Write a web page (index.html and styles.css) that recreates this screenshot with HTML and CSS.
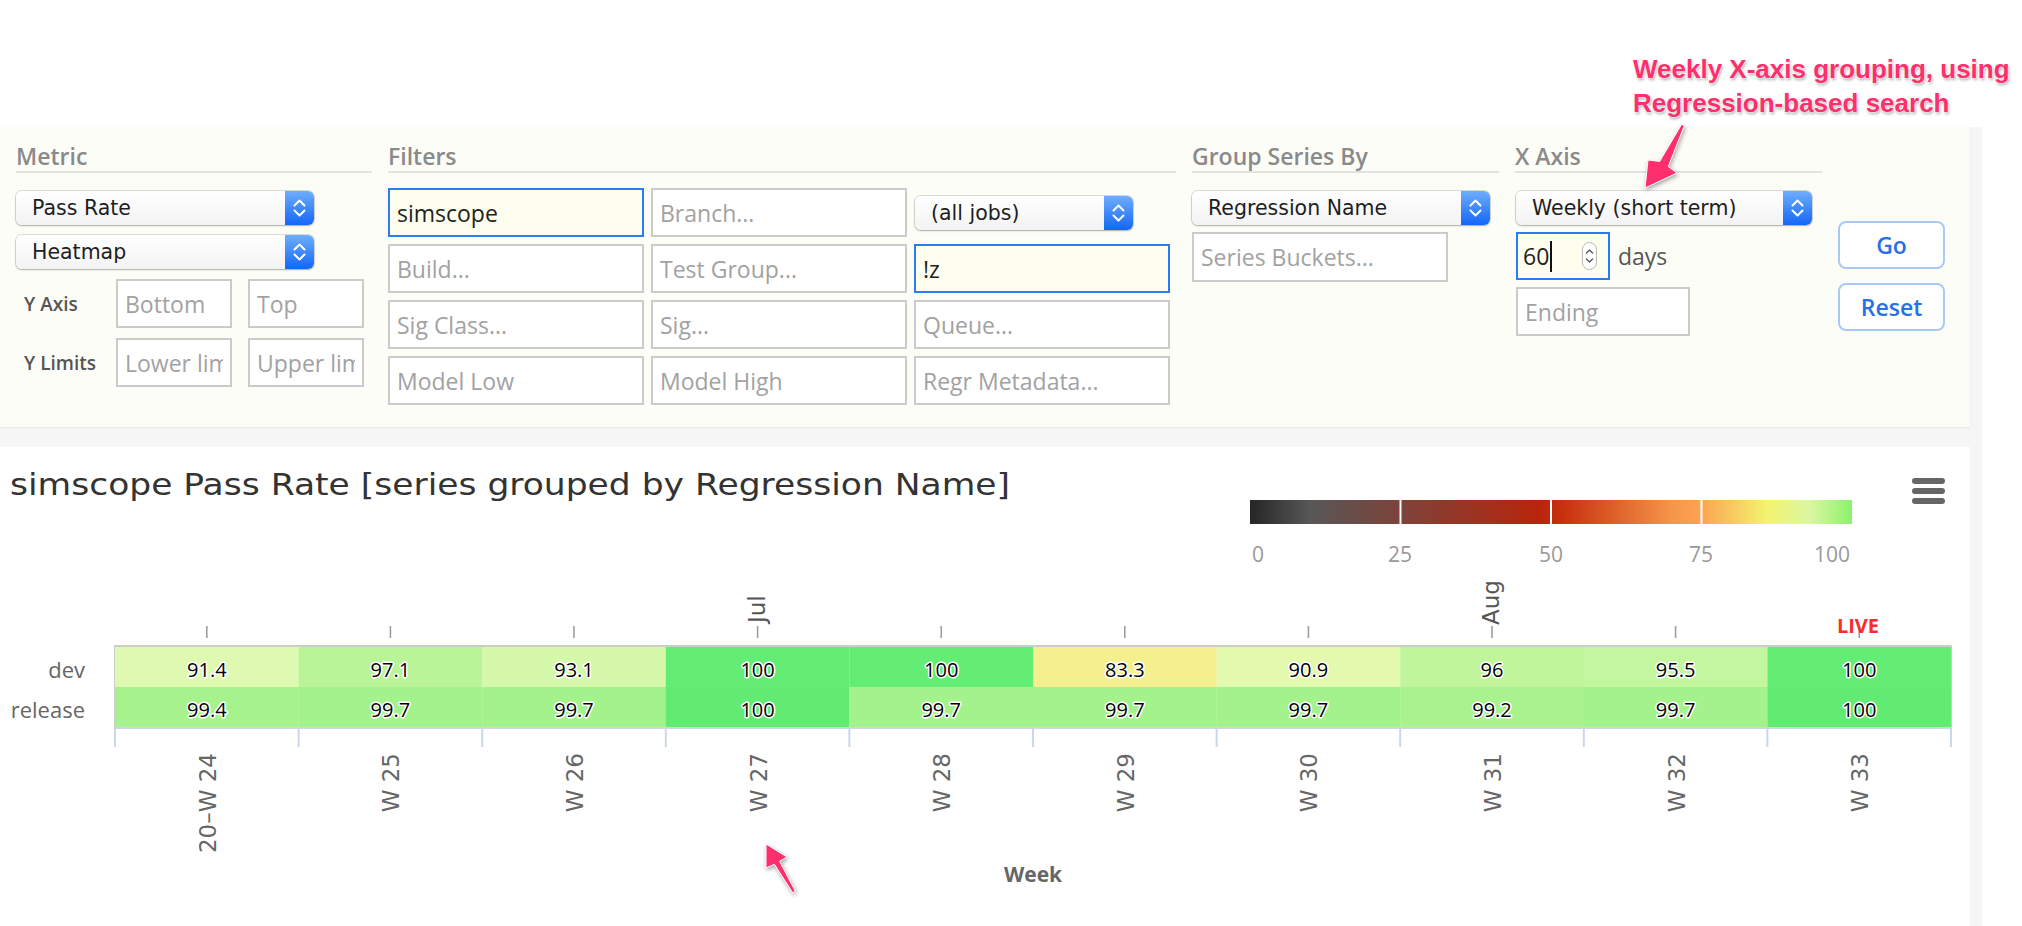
FILE: index.html
```html
<!DOCTYPE html>
<html lang="en">
<head>
<meta charset="utf-8">
<title>simscope Pass Rate</title>
<link rel="stylesheet" href="styles.css">
</head>
<body>
<div class="page">
  <div class="top-space"></div>
  <main class="workspace">
    <section class="panel">
      <div class="col col-metric">
        <h3 class="col-head">Metric</h3>
        <div class="stack">
          <div class="select sel-wide"><span class="select-text">Pass Rate</span><span class="stepper"><svg width="29" height="34" viewBox="0 0 29 34"><path class="chev" d="M9.5 14.5 L14.5 9.5 L19.5 14.5 M9.5 19.5 L14.5 24.5 L19.5 19.5"/></svg></span></div>
          <div class="select sel-wide"><span class="select-text">Heatmap</span><span class="stepper"><svg width="29" height="34" viewBox="0 0 29 34"><path class="chev" d="M9.5 14.5 L14.5 9.5 L19.5 14.5 M9.5 19.5 L14.5 24.5 L19.5 19.5"/></svg></span></div>
          <div class="limit-row"><span class="row-label">Y Axis</span><input class="field field-sm" placeholder="Bottom"><input class="field field-sm" placeholder="Top"></div>
          <div class="limit-row"><span class="row-label">Y Limits</span><input class="field field-sm" placeholder="Lower limit"><input class="field field-sm" placeholder="Upper limit"></div>
        </div>
      </div>
      <div class="col col-filters">
        <h3 class="col-head">Filters</h3>
        <div class="filter-grid">
          <input class="field focus" value="simscope">
          <input class="field" placeholder="Branch...">
          <div class="cell-center"><div class="select sel-jobs"><span class="select-text">(all jobs)</span><span class="stepper"><svg width="29" height="34" viewBox="0 0 29 34"><path class="chev" d="M9.5 14.5 L14.5 9.5 L19.5 14.5 M9.5 19.5 L14.5 24.5 L19.5 19.5"/></svg></span></div></div>
          <input class="field" placeholder="Build...">
          <input class="field" placeholder="Test Group...">
          <input class="field focus" value="!z">
          <input class="field" placeholder="Sig Class...">
          <input class="field" placeholder="Sig...">
          <input class="field" placeholder="Queue...">
          <input class="field" placeholder="Model Low">
          <input class="field" placeholder="Model High">
          <input class="field" placeholder="Regr Metadata...">
        </div>
      </div>
      <div class="col col-group">
        <h3 class="col-head">Group Series By</h3>
        <div class="group-stack">
          <div class="select sel-wide"><span class="select-text">Regression Name</span><span class="stepper"><svg width="29" height="34" viewBox="0 0 29 34"><path class="chev" d="M9.5 14.5 L14.5 9.5 L19.5 14.5 M9.5 19.5 L14.5 24.5 L19.5 19.5"/></svg></span></div>
          <input class="field field-buckets" placeholder="Series Buckets...">
        </div>
      </div>
      <div class="col col-xaxis">
        <h3 class="col-head">X Axis</h3>
        <div class="xaxis-stack">
          <div class="select sel-x"><span class="select-text">Weekly (short term)</span><span class="stepper"><svg width="29" height="34" viewBox="0 0 29 34"><path class="chev" d="M9.5 14.5 L14.5 9.5 L19.5 14.5 M9.5 19.5 L14.5 24.5 L19.5 19.5"/></svg></span></div>
          <div class="days-row">
            <div class="num"><span class="num-value">60</span><span class="caret"></span><svg class="spin" width="15" height="28" viewBox="0 0 15 28"><rect x="0.5" y="0.5" width="14" height="27" rx="7" class="spin-body"/><path class="spin-chev" d="M4.5 11 L7.5 8 L10.5 11 M4.5 17 L7.5 20 L10.5 17"/></svg></div>
            <span class="days">days</span>
          </div>
          <input class="field field-ending" placeholder="Ending">
        </div>
      </div>
      <div class="col col-buttons">
        <button class="btn">Go</button>
        <button class="btn">Reset</button>
      </div>
    </section>

    <section class="chart-card">
      <svg class="chart-svg" width="1970" height="479" viewBox="0 0 1970 479">
        <defs>
          <linearGradient id="legendGrad" x1="0" x2="1" y1="0" y2="0">
            <stop offset="0" stop-color="#262626"/>
            <stop offset="0.1" stop-color="#575757"/>
            <stop offset="0.25" stop-color="#7d4339"/>
            <stop offset="0.48" stop-color="#b8250b"/>
            <stop offset="0.52" stop-color="#c9300f"/>
            <stop offset="0.7" stop-color="#f59548"/>
            <stop offset="0.75" stop-color="#fba552"/>
            <stop offset="0.86" stop-color="#f3f46e"/>
            <stop offset="0.93" stop-color="#dbf6a2"/>
            <stop offset="1" stop-color="#8af36c"/>
          </linearGradient>
        </defs>

        <text class="c-title" x="10" y="48" textLength="1000" lengthAdjust="spacingAndGlyphs">simscope Pass Rate [series grouped by Regression Name]</text>

        <g class="c-menu">
          <rect x="1912" y="31" width="33" height="6" rx="3"/>
          <rect x="1912" y="41" width="33" height="6" rx="3"/>
          <rect x="1912" y="51" width="33" height="6" rx="3"/>
        </g>

        <rect x="1250" y="53" width="602" height="24" fill="url(#legendGrad)"/>
        <g class="c-legend-sep">
          <line x1="1400.5" y1="53" x2="1400.5" y2="77"/>
          <line x1="1551" y1="53" x2="1551" y2="77"/>
          <line x1="1701.5" y1="53" x2="1701.5" y2="77"/>
        </g>
        <g class="c-legend-lbl">
          <text x="1252" y="115">0</text>
          <text x="1400" y="115" text-anchor="middle">25</text>
          <text x="1551" y="115" text-anchor="middle">50</text>
          <text x="1701" y="115" text-anchor="middle">75</text>
          <text x="1850" y="115" text-anchor="end">100</text>
        </g>

        <g class="c-month">
          <text transform="translate(765,176) rotate(-90)">Jul</text>
          <text transform="translate(1499,178) rotate(-90)">Aug</text>
        </g>

        <g class="c-top-tick">
          <line x1="206.8" y1="179" x2="206.8" y2="191"/>
          <line x1="390.4" y1="179" x2="390.4" y2="191"/>
          <line x1="574" y1="179" x2="574" y2="191"/>
          <line x1="757.6" y1="179" x2="757.6" y2="191"/>
          <line x1="941.2" y1="179" x2="941.2" y2="191"/>
          <line x1="1124.8" y1="179" x2="1124.8" y2="191"/>
          <line x1="1308.4" y1="179" x2="1308.4" y2="191"/>
          <line x1="1492" y1="179" x2="1492" y2="191"/>
          <line x1="1675.6" y1="179" x2="1675.6" y2="191"/>
          <line x1="1859.2" y1="179" x2="1859.2" y2="191"/>
        </g>
        <text class="c-live" x="1858" y="186" text-anchor="middle">LIVE</text>

        <rect class="c-plot-border" x="115" y="199" width="1836" height="82"/>

        <g class="c-cells">
          <rect x="115" y="200" width="183.8" height="40" fill="#e0f9b0"/>
          <rect x="298.6" y="200" width="183.8" height="40" fill="#b9f598"/>
          <rect x="482.2" y="200" width="183.8" height="40" fill="#d5f8ab"/>
          <rect x="665.8" y="200" width="183.8" height="40" fill="#63ed74"/>
          <rect x="849.4" y="200" width="183.8" height="40" fill="#63ed74"/>
          <rect x="1033" y="200" width="183.8" height="40" fill="#f6ef8e"/>
          <rect x="1216.6" y="200" width="183.8" height="40" fill="#e2f9ae"/>
          <rect x="1400.2" y="200" width="183.8" height="40" fill="#c0f59c"/>
          <rect x="1583.8" y="200" width="183.8" height="40" fill="#c4f6a0"/>
          <rect x="1767.4" y="200" width="183.6" height="40" fill="#63ed74"/>

          <rect x="115" y="240" width="183.8" height="40" fill="#a6f38d"/>
          <rect x="298.6" y="240" width="183.8" height="40" fill="#a3f28b"/>
          <rect x="482.2" y="240" width="183.8" height="40" fill="#a3f28b"/>
          <rect x="665.8" y="240" width="183.8" height="40" fill="#62eb73"/>
          <rect x="849.4" y="240" width="183.8" height="40" fill="#a3f28b"/>
          <rect x="1033" y="240" width="183.8" height="40" fill="#a3f28b"/>
          <rect x="1216.6" y="240" width="183.8" height="40" fill="#a3f28b"/>
          <rect x="1400.2" y="240" width="183.8" height="40" fill="#a8f38e"/>
          <rect x="1583.8" y="240" width="183.8" height="40" fill="#a3f28b"/>
          <rect x="1767.4" y="240" width="183.6" height="40" fill="#62eb73"/>
        </g>

        <g class="c-val">
          <text x="206.8" y="230">91.4</text>
          <text x="390.4" y="230">97.1</text>
          <text x="574" y="230">93.1</text>
          <text x="757.6" y="230">100</text>
          <text x="941.2" y="230">100</text>
          <text x="1124.8" y="230">83.3</text>
          <text x="1308.4" y="230">90.9</text>
          <text x="1492" y="230">96</text>
          <text x="1675.6" y="230">95.5</text>
          <text x="1859.2" y="230">100</text>

          <text x="206.8" y="270">99.4</text>
          <text x="390.4" y="270">99.7</text>
          <text x="574" y="270">99.7</text>
          <text x="757.6" y="270">100</text>
          <text x="941.2" y="270">99.7</text>
          <text x="1124.8" y="270">99.7</text>
          <text x="1308.4" y="270">99.7</text>
          <text x="1492" y="270">99.2</text>
          <text x="1675.6" y="270">99.7</text>
          <text x="1859.2" y="270">100</text>
        </g>

        <g class="c-ylbl">
          <text x="85" y="231">dev</text>
          <text x="85" y="271">release</text>
        </g>

        <line class="c-axis" x1="115" y1="281" x2="1952" y2="281"/>
        <g class="c-bot-tick">
          <line x1="115" y1="282" x2="115" y2="300"/>
          <line x1="298.6" y1="282" x2="298.6" y2="300"/>
          <line x1="482.2" y1="282" x2="482.2" y2="300"/>
          <line x1="665.8" y1="282" x2="665.8" y2="300"/>
          <line x1="849.4" y1="282" x2="849.4" y2="300"/>
          <line x1="1033" y1="282" x2="1033" y2="300"/>
          <line x1="1216.6" y1="282" x2="1216.6" y2="300"/>
          <line x1="1400.2" y1="282" x2="1400.2" y2="300"/>
          <line x1="1583.8" y1="282" x2="1583.8" y2="300"/>
          <line x1="1767.4" y1="282" x2="1767.4" y2="300"/>
          <line x1="1951" y1="282" x2="1951" y2="300"/>
        </g>

        <g class="c-xlbl">
          <text transform="translate(216,306) rotate(-90)">20–W 24</text>
          <text transform="translate(399.4,306) rotate(-90)">W 25</text>
          <text transform="translate(583,306) rotate(-90)">W 26</text>
          <text transform="translate(766.6,306) rotate(-90)">W 27</text>
          <text transform="translate(950.2,306) rotate(-90)">W 28</text>
          <text transform="translate(1133.8,306) rotate(-90)">W 29</text>
          <text transform="translate(1317.4,306) rotate(-90)">W 30</text>
          <text transform="translate(1501,306) rotate(-90)">W 31</text>
          <text transform="translate(1684.6,306) rotate(-90)">W 32</text>
          <text transform="translate(1868.2,306) rotate(-90)">W 33</text>
        </g>

        <text class="c-xtitle" x="1033" y="435" text-anchor="middle">Week</text>
      </svg>
    </section>
  </main>

  <div class="annotation">Weekly X-axis grouping, using<br>Regression-based search</div>
  <svg class="overlay" width="2022" height="926" viewBox="0 0 2022 926">
    <polygon class="arrow-shape" points="1681.7,124.2 1659.7,161.4 1648,160 1645,188 1677,173 1668.3,166.6 1684.3,125.8"/>
    <polygon class="arrow-shape" points="795.3,891.2 779.6,861.3 787,857 766,844 766,868 774.4,864.3 792.7,892.8"/>
  </svg>
</div>
</body>
</html>
```

FILE: styles.css
```css
* {
  box-sizing: border-box;
}

html,
body {
  margin: 0;
  padding: 0;
  background: #ffffff;
}

body {
  font-family: "Open Sans", "DejaVu Sans", sans-serif;
  color: #222222;
  overflow: hidden;
}

.page {
  position: relative;
  width: 2022px;
}

.top-space {
  height: 127px;
}

.workspace {
  width: 1982px;
  padding-right: 12px;
  background: #f6f6f6;
  display: flex;
  flex-direction: column;
  gap: 20px;
}

/* ---------- control panel ---------- */
.panel {
  height: 300px;
  background: #fdfdf8;
  display: flex;
  align-items: flex-start;
  gap: 16px;
  padding: 14px 0 0 16px;
  box-shadow: 0 1px 2px rgba(0, 0, 0, 0.08);
}

.col-metric { width: 356px; }
.col-filters { width: 788px; }
.col-group { width: 307px; }
.col-xaxis { width: 307px; }

.col-buttons {
  width: 107px;
  padding-top: 80px;
  display: flex;
  flex-direction: column;
  gap: 14px;
}

.col-head {
  margin: 0;
  font-size: 23px;
  font-weight: 600;
  line-height: 30px;
  color: #8a8a8a;
  border-bottom: 2px solid #e2e2e2;
  white-space: nowrap;
}

.stack {
  margin-top: 18px;
  display: flex;
  flex-direction: column;
  gap: 10px;
}

.select {
  display: flex;
  height: 34px;
  border-radius: 6px;
  background: linear-gradient(#ffffff, #f3f3f3);
  box-shadow: 0 0 0 1px rgba(0, 0, 0, 0.13), 0 1px 2px rgba(0, 0, 0, 0.22);
  overflow: hidden;
}

.select-text {
  flex: 1;
  padding-left: 16px;
  font-family: "DejaVu Sans", sans-serif;
  font-size: 20.5px;
  line-height: 34px;
  color: #1e1e1e;
  white-space: nowrap;
  overflow: hidden;
}

.stepper {
  width: 29px;
  flex: none;
  display: flex;
  background: linear-gradient(#6eaefe, #1466f6);
}

.chev {
  fill: none;
  stroke: #ffffff;
  stroke-width: 2;
  stroke-linecap: round;
  stroke-linejoin: round;
}

.sel-wide { width: 298px; }
.sel-jobs { width: 218px; }
.sel-x { width: 296px; }

.limit-row {
  display: flex;
  align-items: center;
  gap: 16px;
  height: 49px;
}

.row-label {
  width: 84px;
  padding-left: 8px;
  font-size: 19px;
  font-weight: 600;
  color: #555555;
  white-space: nowrap;
}

.field {
  width: 256px;
  height: 49px;
  margin: 0;
  border: 2px solid #cbcbcb;
  border-radius: 0;
  background: #ffffff;
  font-family: "Open Sans", sans-serif;
  font-size: 23px;
  color: #222222;
  padding: 0 7px;
  outline: none;
}

.field::placeholder {
  color: #a2a2a2;
  opacity: 1;
}

.field.focus {
  border-color: #2a7cf3;
  background: #fefeee;
}

.field-sm { width: 116px; }

.filter-grid {
  margin-top: 15px;
  display: grid;
  grid-template-columns: repeat(3, 256px);
  grid-auto-rows: 49px;
  column-gap: 7px;
  row-gap: 7px;
}

.cell-center {
  display: flex;
  align-items: center;
  padding-left: 1px;
}

.group-stack {
  margin-top: 18px;
  display: flex;
  flex-direction: column;
  gap: 7px;
}

.field-buckets { height: 50px; }

.xaxis-stack {
  margin-top: 18px;
  display: flex;
  flex-direction: column;
  gap: 7px;
  padding-left: 1px;
}

.days-row {
  display: flex;
  align-items: center;
  gap: 8px;
}

.num {
  width: 94px;
  height: 48px;
  border: 2px solid #2a7cf3;
  background: #fefeee;
  display: flex;
  align-items: center;
  padding-left: 5px;
}

.num-value {
  font-size: 23px;
  color: #222222;
}

.caret {
  width: 2px;
  height: 31px;
  background: #111111;
  margin-left: 1px;
}

.spin {
  margin-left: auto;
  margin-right: 11px;
}

.spin-body {
  fill: #ffffff;
  stroke: #b8b8b8;
}

.spin-chev {
  fill: none;
  stroke: #555555;
  stroke-width: 1.3;
  stroke-linecap: round;
  stroke-linejoin: round;
}

.days {
  font-size: 23px;
  color: #555555;
}

.field-ending { width: 174px; }

.btn {
  width: 107px;
  height: 48px;
  border: 2px solid #a9c9f7;
  border-radius: 8px;
  background: #ffffff;
  color: #2670e8;
  font-family: "Open Sans", sans-serif;
  font-size: 23px;
  font-weight: 600;
  padding: 0;
}

/* ---------- chart ---------- */
.chart-card {
  background: #ffffff;
  height: 479px;
}

.chart-svg {
  display: block;
}

.c-title {
  font-family: "DejaVu Sans", sans-serif;
  font-size: 31px;
  fill: #333333;
}

.c-menu rect { fill: #666666; }

.c-legend-sep line {
  stroke: #ffffff;
  stroke-width: 2;
}

.c-legend-lbl text {
  font-family: "Open Sans", sans-serif;
  font-size: 21px;
  fill: #999999;
}

.c-month text {
  font-family: "DejaVu Sans", sans-serif;
  font-size: 23px;
  fill: #555555;
}

.c-top-tick line {
  stroke: #999999;
  stroke-width: 1.5;
}

.c-live {
  font-family: "Open Sans", sans-serif;
  font-size: 20px;
  font-weight: 700;
  fill: #ff2b2b;
}

.c-plot-border {
  fill: none;
  stroke: #cccccc;
  stroke-width: 2;
}

.c-val text {
  font-family: "Open Sans", sans-serif;
  font-size: 20px;
  font-weight: 500;
  text-anchor: middle;
  fill: #000000;
  stroke: #ffffff;
  stroke-width: 3px;
  stroke-linejoin: round;
  paint-order: stroke;
}

.c-ylbl text {
  font-family: "Open Sans", sans-serif;
  font-size: 22px;
  fill: #666666;
  text-anchor: end;
}

.c-axis {
  stroke: #ccd6eb;
  stroke-width: 2;
}

.c-bot-tick line {
  stroke: #ccd6eb;
  stroke-width: 2;
}

.c-xlbl text {
  font-family: "DejaVu Sans", sans-serif;
  font-size: 23px;
  fill: #666666;
  text-anchor: end;
}

.c-xtitle {
  font-family: "Open Sans", sans-serif;
  font-size: 21px;
  font-weight: 700;
  fill: #666666;
}

/* ---------- annotations ---------- */
.annotation {
  position: absolute;
  left: 1633px;
  top: 52px;
  font-family: "Liberation Sans", Arial, sans-serif;
  font-weight: 700;
  font-size: 26px;
  line-height: 34px;
  color: #ff2e6c;
  white-space: nowrap;
  text-shadow: 0 0 2px #ffffff, 0 0 2px #ffffff, 1px 2px 3px rgba(0, 0, 0, 0.35);
  z-index: 2;
}

.overlay {
  position: absolute;
  left: 0;
  top: 0;
  pointer-events: none;
  z-index: 2;
}

.arrow-shape {
  fill: #ff2e6c;
  stroke: #ffffff;
  stroke-width: 1;
  stroke-linejoin: round;
  filter: drop-shadow(1px 2px 2px rgba(0, 0, 0, 0.35));
}
```
